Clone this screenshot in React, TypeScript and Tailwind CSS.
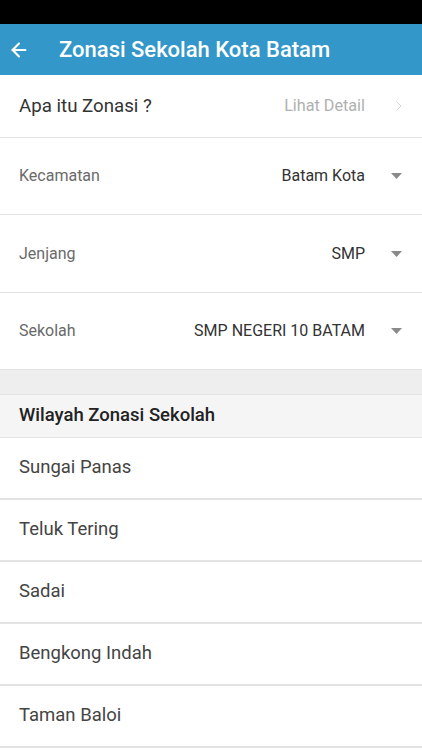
import { ArrowLeft, ChevronRight } from "lucide-react";

const pickers = [
  { label: "Kecamatan", value: "Batam Kota" },
  { label: "Jenjang", value: "SMP" },
  { label: "Sekolah", value: "SMP NEGERI 10 BATAM" },
];

const wilayah = ["Sungai Panas", "Teluk Tering", "Sadai", "Bengkong Indah", "Taman Baloi"];

const Caret = () => (
  <svg width="11" height="6" viewBox="0 0 11 6" className="ml-[26px]">
    <path d="M0 0h11L5.5 6z" fill="#8a8a8a" />
  </svg>
);

export default function App() {
  return (
    <div className="w-[422px] h-[750px] overflow-hidden bg-white font-['Roboto',sans-serif]">
      {/* status bar */}
      <div className="h-6 bg-black" />

      {/* app bar */}
      <div className="h-[51px] bg-[#3397c9] flex items-center text-white">
        <ArrowLeft className="ml-[8px] size-[22px]" strokeWidth={2.3} />
        <span className="ml-[29px] text-[22px] font-medium">Zonasi Sekolah Kota Batam</span>
      </div>

      <div className="h-[63px] border-b border-[#e3e3e3] flex items-center pl-[19px] pr-[15px]">
        <span className="text-[18.7px] text-[#333]">Apa itu Zonasi ?</span>
        <span className="ml-auto text-[16.2px] text-[#b0b0b0]">Lihat Detail</span>
        <ChevronRight className="ml-[26px] size-[16px] text-[#cdcdcd]" strokeWidth={1.3} />
      </div>

      {pickers.map((p) => (
        <div key={p.label} className="h-[77.4px] border-b border-[#e3e3e3] flex items-center pl-[19px] pr-[20px]">
          <span className="text-[16px] text-[#6a6a6a]">{p.label}</span>
          <span className="ml-auto text-[16px] text-[#333]">{p.value}</span>
          <Caret />
        </div>
      ))}

      {/* section spacer */}
      <div className="h-[25px] bg-[#eeeeee] border-b border-[#e3e3e3]" />

      <div className="h-[43px] bg-[#f5f5f5] border-b border-[#e3e3e3] flex items-center pl-[19px]">
        <span className="text-[18.5px] font-medium text-[#222]">Wilayah Zonasi Sekolah</span>
      </div>

      {wilayah.map((w) => (
        <div key={w} className="h-[62px] border-b-2 border-[#e3e3e3] flex items-center pl-[19px]">
          <span className="text-[18.5px] text-[#444]">{w}</span>
        </div>
      ))}
    </div>
  );
}
